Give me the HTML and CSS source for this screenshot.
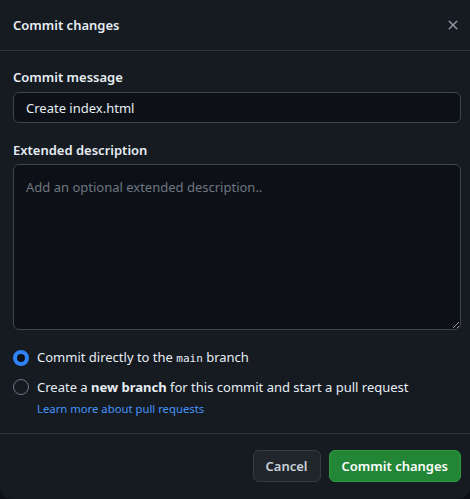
FILE: index.html
```html
<!DOCTYPE html>
<html lang="en">
<head>
<meta charset="utf-8">
<title>Commit changes</title>
<link rel="stylesheet" href="styles.css">
</head>
<body>
<div class="dialog">
  <header class="dialog-header">
    <h1 class="dialog-title">Commit changes</h1>
    <button class="close-btn" aria-label="Close">
      <svg width="16" height="16" viewBox="0 0 16 16" aria-hidden="true"><path fill="currentColor" d="M3.72 3.72a.75.75 0 0 1 1.06 0L8 6.94l3.22-3.220a.749.749 0 0 1 1.275.326.749.749 0 0 1-.215.734L9.06 8l3.22 3.22a.749.749 0 0 1-.326 1.275.749.749 0 0 1-.734-.215L8 9.06l-3.22 3.22a.751.751 0 0 1-1.042-.018.751.751 0 0 1-.018-1.042L6.94 8 3.72 4.780a.75.75 0 0 1 0-1.060Z"/></svg>
    </button>
  </header>
  <div class="dialog-body">
    <label class="field-label label-message" for="msg">Commit message</label>
    <input id="msg" class="text-input" type="text" value="Create index.html">
    <label class="field-label label-desc" for="desc">Extended description</label>
    <textarea id="desc" class="text-area" placeholder="Add an optional extended description.."></textarea>
    <div class="choices">
      <label class="choice">
        <input type="radio" name="branch" class="radio" checked>
        <span>Commit directly to the <code class="branch">main</code> branch</span>
      </label>
      <label class="choice">
        <input type="radio" name="branch" class="radio">
        <span>Create a <strong>new branch</strong> for this commit and start a pull request</span>
      </label>
      <a class="learn-link" href="#">Learn more about pull requests</a>
    </div>
  </div>
  <footer class="dialog-footer">
    <button class="btn btn-default">Cancel</button>
    <button class="btn btn-primary">Commit changes</button>
  </footer>
</div>
</body>
</html>
```
FILE: styles.css
```css
html, body {
  margin: 0;
  height: 100%;
}

body {
  background: #0d1117;
  font-family: "Noto Sans", "Open Sans", sans-serif;
  font-size: 13px;
  color: #e6edf3;
}

.dialog {
  box-sizing: border-box;
  height: 499px;
  background: #161b22;
  border-radius: 0 0 12px 12px;
  display: flex;
  flex-direction: column;
}

.dialog-header {
  flex: none;
  height: 51px;
  box-sizing: border-box;
  border-bottom: 1px solid #30363d;
  display: flex;
  align-items: center;
  justify-content: space-between;
  padding: 0 1px 0 13px;
}

.dialog-title {
  margin: 0;
  font-size: 13px;
  font-weight: 600;
  color: #e6edf3;
}

.close-btn {
  background: none;
  border: 0;
  color: #8d96a0;
  width: 32px;
  height: 32px;
  display: flex;
  align-items: center;
  justify-content: center;
  padding: 0;
}

.dialog-body {
  padding: 16px 9px 0 13px;
  display: flex;
  flex-direction: column;
  flex: 1;
  min-height: 0;
}

.field-label {
  font-weight: 600;
  font-size: 13px;
  line-height: 20px;
}

.label-message {
  margin-bottom: 5px;
}

.label-desc {
  margin-bottom: 4px;
}

.text-input,
.text-area {
  box-sizing: border-box;
  width: 100%;
  background: #0d1117;
  border: 1px solid #3d444d;
  border-radius: 6px;
  color: #e6edf3;
  font-family: inherit;
  font-size: 13px;
  padding: 0 12px;
  margin: 0;
}

.text-input {
  height: 31px;
  margin-bottom: 17px;
}

.text-area {
  display: block;
  height: 166px;
  padding-top: 12px;
  line-height: 20px;
  resize: vertical;
}

.text-area::placeholder {
  color: #6e7681;
}

.choices {
  padding-top: 13px;
  display: flex;
  flex-direction: column;
}

.choice {
  display: flex;
  align-items: center;
  gap: 8px;
  line-height: 20px;
  height: 29px;
}

.radio {
  appearance: none;
  margin: 0;
  width: 16px;
  height: 16px;
  border-radius: 50%;
  border: 1px solid #6e7681;
  box-sizing: border-box;
  flex: none;
}

.radio:checked {
  border: 4px solid #2f81f7;
  background: #0d1117;
}

.branch {
  font-family: "DejaVu Sans Mono", "Liberation Mono", monospace;
  font-size: 11px;
}

.learn-link {
  margin-left: 24px;
  font-size: 11.3px;
  line-height: 16px;
  color: #4493f8;
  text-decoration: none;
}

.dialog-footer {
  flex: none;
  border-top: 1px solid #30363d;
  padding: 16px 9px 17px 13px;
  display: flex;
  justify-content: flex-end;
  gap: 8px;
}

.btn {
  height: 32px;
  padding: 0 12px;
  border-radius: 6px;
  font-family: inherit;
  font-size: 13px;
  font-weight: 600;
}

.btn-default {
  background: #21262d;
  border: 1px solid #363b42;
  color: #c9d1d9;
}

.btn-primary {
  background: #238636;
  border: 1px solid #2e9a40;
  color: #ffffff;
}
```
